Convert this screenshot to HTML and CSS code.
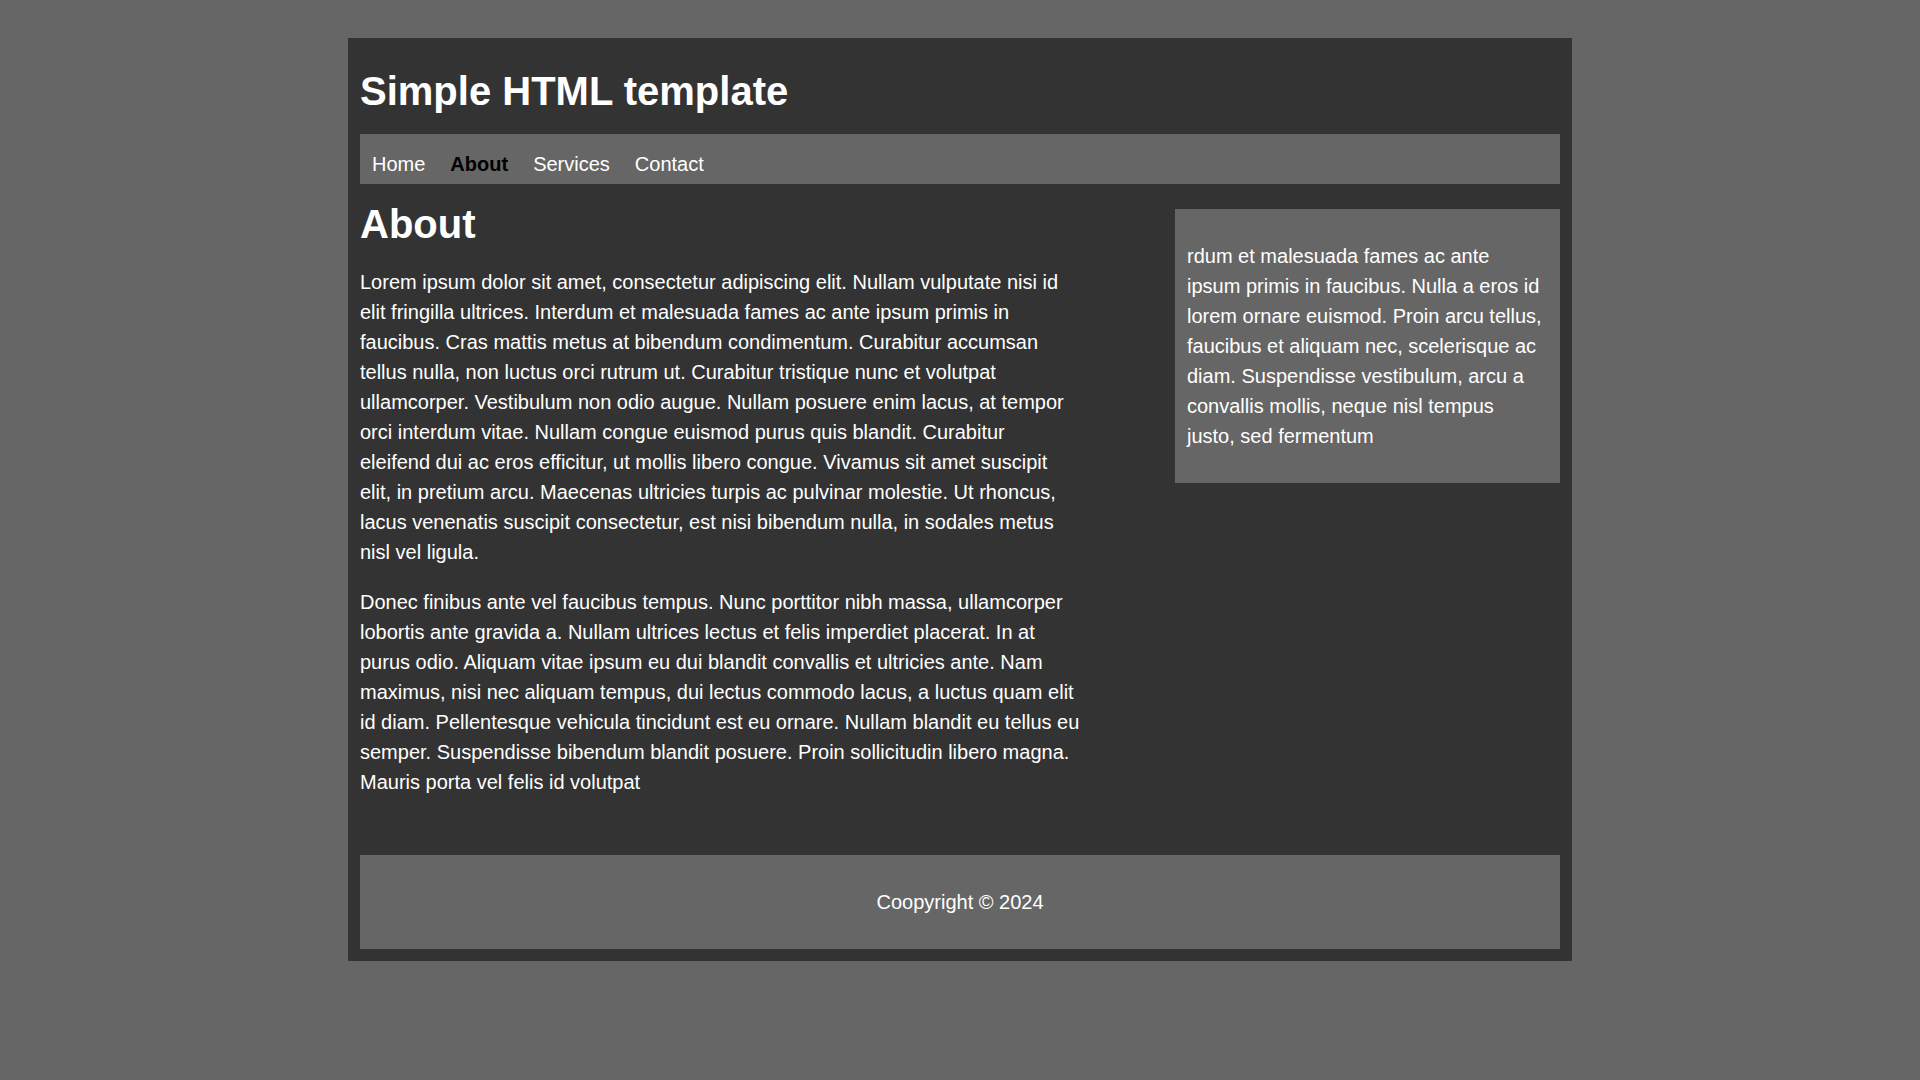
FILE: index.html
```html
<!DOCTYPE html>
<html lang="en">
<head>
<meta charset="utf-8">
<title>Simple HTML template</title>
<link rel="stylesheet" href="styles.css">
</head>
<body>
<div class="page">
  <header class="site-header">
    <h1 class="site-title">Simple HTML template</h1>
    <nav class="nav">
      <a class="nav-link" href="#">Home</a>
      <a class="nav-link active" href="#">About</a>
      <a class="nav-link" href="#">Services</a>
      <a class="nav-link" href="#">Contact</a>
    </nav>
  </header>
  <div class="content">
    <main class="main">
      <h2 class="page-title">About</h2>
      <p>Lorem ipsum dolor sit amet, consectetur adipiscing elit. Nullam vulputate nisi id elit fringilla ultrices. Interdum et malesuada fames ac ante ipsum primis in faucibus. Cras mattis metus at bibendum condimentum. Curabitur accumsan tellus nulla, non luctus orci rutrum ut. Curabitur tristique nunc et volutpat ullamcorper. Vestibulum non odio augue. Nullam posuere enim lacus, at tempor orci interdum vitae. Nullam congue euismod purus quis blandit. Curabitur eleifend dui ac eros efficitur, ut mollis libero congue. Vivamus sit amet suscipit elit, in pretium arcu. Maecenas ultricies turpis ac pulvinar molestie. Ut rhoncus, lacus venenatis suscipit consectetur, est nisi bibendum nulla, in sodales metus nisl vel ligula.</p>
      <p>Donec finibus ante vel faucibus tempus. Nunc porttitor nibh massa, ullamcorper lobortis ante gravida a. Nullam ultrices lectus et felis imperdiet placerat. In at purus odio. Aliquam vitae ipsum eu dui blandit convallis et ultricies ante. Nam maximus, nisi nec aliquam tempus, dui lectus commodo lacus, a luctus quam elit id diam. Pellentesque vehicula tincidunt est eu ornare. Nullam blandit eu tellus eu semper. Suspendisse bibendum blandit posuere. Proin sollicitudin libero magna. Mauris porta vel felis id volutpat</p>
    </main>
    <aside class="sidebar">
      <p>rdum et malesuada fames ac ante ipsum primis in faucibus. Nulla a eros id lorem ornare euismod. Proin arcu tellus, faucibus et aliquam nec, scelerisque ac diam. Suspendisse vestibulum, arcu a convallis mollis, neque nisl tempus justo, sed fermentum</p>
    </aside>
  </div>
  <footer class="footer">
    <p>Coopyright &copy; 2024</p>
  </footer>
</div>
</body>
</html>
```

FILE: styles.css
```css
html, body {
  margin: 0;
  padding: 0;
}

body {
  background: #666666;
  color: #ffffff;
  font-family: "Liberation Sans", Arial, sans-serif;
  font-size: 20px;
  line-height: 30px;
}

.page {
  width: 1200px;
  margin: 38px auto 0;
  padding: 12px;
  background: #333333;
}

.site-title {
  margin: 18px 0 20px;
  font-size: 40px;
  line-height: 46px;
  font-weight: bold;
}

.nav {
  display: flex;
  gap: 25px;
  background: #666666;
  padding: 15px 12px 5px;
  line-height: 30px;
}

.nav-link {
  color: #ffffff;
  text-decoration: none;
}

.nav-link.active {
  color: #000000;
  font-weight: bold;
}

.content {
  display: flex;
  justify-content: space-between;
  align-items: flex-start;
}

.main {
  width: 720px;
}

.main p {
  margin: 20px 0;
}

.page-title {
  margin: 17px 0 20px;
  font-size: 40px;
  line-height: 46px;
  font-weight: bold;
}

.sidebar {
  width: 385px;
  box-sizing: border-box;
  margin-top: 25px;
  padding: 12px 16px 12px 12px;
  background: #666666;
}

.sidebar p {
  margin: 20px 0;
}

.footer {
  margin-top: 38px;
  padding: 12px;
  background: #666666;
  text-align: center;
}

.footer p {
  margin: 20px 0;
}
```
